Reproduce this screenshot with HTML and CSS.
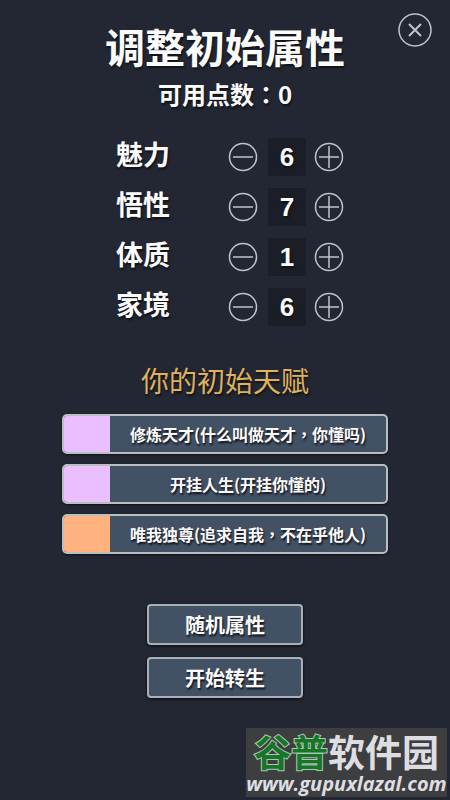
FILE: index.html
```html
<!DOCTYPE html>
<html lang="zh-CN">
<head>
    <meta charset="UTF-8">
    <meta name="viewport" content="width=device-width, initial-scale=1">
    <title>调整初始属性</title>
    <link rel="stylesheet" href="styles.css">
</head>
<body>
<button type="button" class="close" aria-label="关闭">
    <svg viewBox="0 0 34 34"><circle cx="17" cy="17" r="16"/><path d="M11 11L23 23M23 11L11 23" stroke-width="2"/></svg>
</button>
<main class="panel">
    <h1>调整初始属性</h1>
    <p class="points">可用点数<span class="mark" lang="zh-TW">：</span>0</p>

    <!-- attributes -->
    <div class="attributes">
        <div class="attribute">
            <label for="charm">魅力</label>
            <button type="button" class="step" aria-label="减少魅力"><svg viewBox="0 0 30 30"><circle cx="15" cy="15" r="13.5"/><path d="M5 15H25"/></svg></button>
            <input type="text" id="charm" value="6">
            <button type="button" class="step" aria-label="增加魅力"><svg viewBox="0 0 30 30"><circle cx="15" cy="15" r="13.5"/><path d="M5 15H25M15 4V26"/></svg></button>
        </div>
        <div class="attribute">
            <label for="insight">悟性</label>
            <button type="button" class="step" aria-label="减少悟性"><svg viewBox="0 0 30 30"><circle cx="15" cy="15" r="13.5"/><path d="M5 15H25"/></svg></button>
            <input type="text" id="insight" value="7">
            <button type="button" class="step" aria-label="增加悟性"><svg viewBox="0 0 30 30"><circle cx="15" cy="15" r="13.5"/><path d="M5 15H25M15 4V26"/></svg></button>
        </div>
        <div class="attribute">
            <label for="body">体质</label>
            <button type="button" class="step" aria-label="减少体质"><svg viewBox="0 0 30 30"><circle cx="15" cy="15" r="13.5"/><path d="M5 15H25"/></svg></button>
            <input type="text" id="body" value="1">
            <button type="button" class="step" aria-label="增加体质"><svg viewBox="0 0 30 30"><circle cx="15" cy="15" r="13.5"/><path d="M5 15H25M15 4V26"/></svg></button>
        </div>
        <div class="attribute">
            <label for="family">家境</label>
            <button type="button" class="step" aria-label="减少家境"><svg viewBox="0 0 30 30"><circle cx="15" cy="15" r="13.5"/><path d="M5 15H25"/></svg></button>
            <input type="text" id="family" value="6">
            <button type="button" class="step" aria-label="增加家境"><svg viewBox="0 0 30 30"><circle cx="15" cy="15" r="13.5"/><path d="M5 15H25M15 4V26"/></svg></button>
        </div>
    </div>

    <!-- talents -->
    <h2>你的初始天赋</h2>
    <ul class="talents">
        <li class="talent purple"><span class="talent-text">修炼天才(什么叫做天才<span class="mark" lang="zh-TW">，</span>你懂吗)</span></li>
        <li class="talent purple"><span class="talent-text">开挂人生(开挂你懂的)</span></li>
        <li class="talent orange"><span class="talent-text">唯我独尊(追求自我<span class="mark" lang="zh-TW">，</span>不在乎他人)</span></li>
    </ul>

    <div class="actions">
        <button type="button" class="action">随机属性</button>
        <button type="button" class="action">开始转生</button>
    </div>
</main>
<div class="watermark">
    <div class="site-name"><span class="green">谷普</span>软件园</div>
    <div class="site-url">www.gupuxlazal.com</div>
</div>
</body>
</html>
```
FILE: styles.css
```css
* {
    box-sizing: border-box;
}

body {
    margin: 0;
    min-height: 100vh;
    background: #232733;
    color: #fbfbfb;
    font-family: "Noto Sans CJK SC", sans-serif;
    text-shadow: 1px 2px 2px #101218;
}

button {
    padding: 0;
    border: none;
    background: none;
    color: inherit;
    font-family: inherit;
    text-shadow: inherit;
    cursor: pointer;
}

svg {
    display: block;
    width: 100%;
    fill: none;
    stroke: #c2c3c8;
    stroke-width: 1.5;
}

.mark {
    font-family: "Noto Sans CJK TC", sans-serif;
}

.close {
    position: absolute;
    top: 13px;
    right: 18px;
    width: 34px;
}

.panel {
    display: flex;
    flex-direction: column;
    align-items: center;
    padding: 22px 16px 0;
}

h1 {
    margin: 0;
    font-size: 40px;
    line-height: 48px;
}

.points {
    margin: 10px 0 0;
    font-size: 24px;
    font-weight: bold;
    line-height: 28px;
}

/* attributes */
.attributes {
    display: flex;
    flex-direction: column;
    gap: 12px;
    margin-top: 30px;
    padding-left: 10px;
}

.attribute {
    display: flex;
    align-items: center;
}

.attribute label {
    width: 112px;
    padding-bottom: 6px;
    font-size: 27px;
    font-weight: bold;
    line-height: 32px;
}

.attribute input {
    width: 38px;
    height: 38px;
    margin: 0 8px 0 10px;
    padding: 0;
    border: none;
    background: #1b1e26;
    color: #fbfbfb;
    font: bold 26px "Liberation Sans", sans-serif;
    text-align: center;
    text-shadow: inherit;
}

.step {
    width: 30px;
}

/* talents */
h2 {
    margin: 36px 0 0;
    color: #dfb15e;
    font-size: 28px;
    font-weight: normal;
    line-height: 36px;
}

.talents {
    display: flex;
    flex-direction: column;
    gap: 10px;
    width: 78%;
    margin: 16px 0 0;
    padding: 0;
    list-style: none;
}

.talent {
    display: flex;
    height: 40px;
    border: 2px solid #b9bec0;
    border-radius: 5px;
    background: #435165;
    box-shadow: 0 1px 2px #101218;
    overflow: hidden;
}

.talent::before {
    content: "";
    width: 46px;
}

.purple::before {
    background: #eabfff;
}

.orange::before {
    background: #ffb27e;
}

.talent-text {
    flex: 1;
    font-size: 16px;
    font-weight: bold;
    line-height: 36px;
    text-align: center;
    white-space: nowrap;
}

.actions {
    display: flex;
    flex-direction: column;
    gap: 12px;
    margin-top: 50px;
}

.action {
    width: 156px;
    height: 41px;
    border: 2px solid #a9b0b9;
    border-radius: 4px;
    background: #435165;
    box-shadow: 0 1px 2px 1px #14171f;
    font-size: 20px;
    font-weight: bold;
    line-height: 36px;
}

.watermark {
    position: absolute;
    right: 3px;
    bottom: 3px;
    width: 201px;
    padding-top: 3px;
    background: #3d3e3f;
    color: #dedee2;
    font-weight: bold;
    text-align: center;
    text-shadow: none;
    white-space: nowrap;
}

.site-name {
    font-size: 37px;
    line-height: 40px;
}

.green {
    color: #17752a;
    -webkit-text-stroke: 2px #a9cbb0;
    paint-order: stroke fill;
}

.site-url {
    font-family: "Open Sans", sans-serif;
    font-size: 20px;
    font-style: italic;
    line-height: 26px;
}
```
